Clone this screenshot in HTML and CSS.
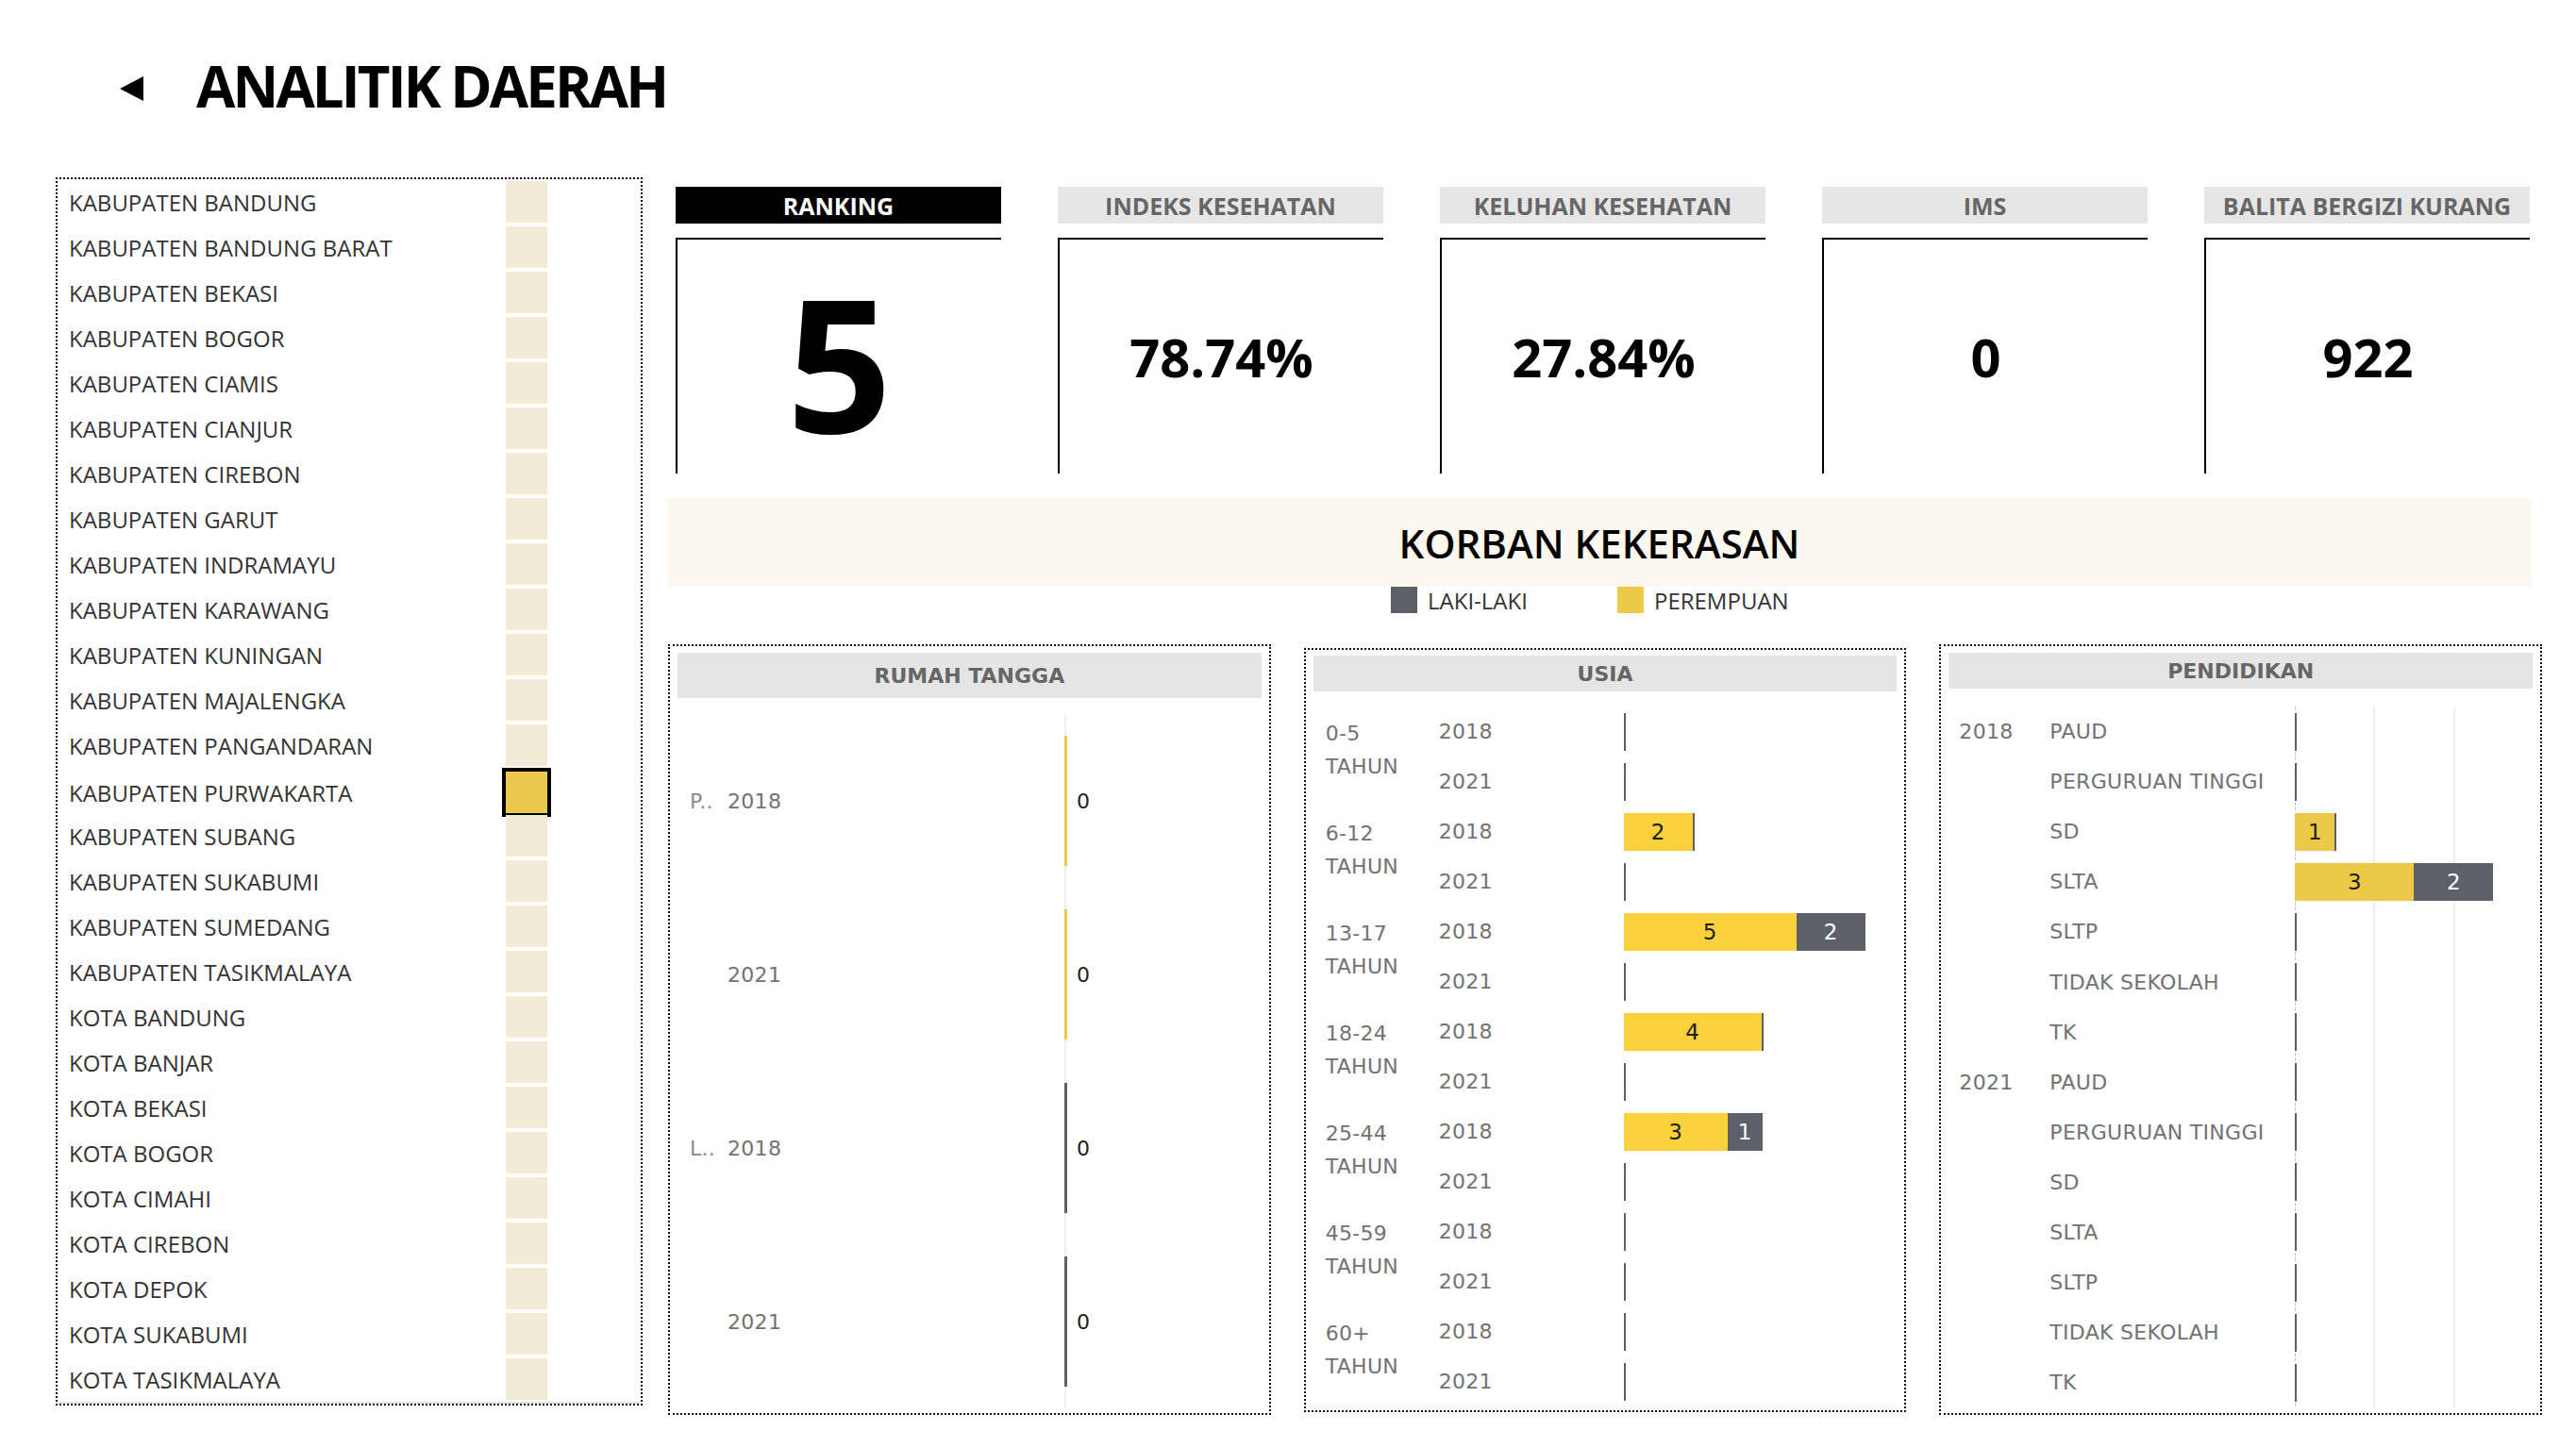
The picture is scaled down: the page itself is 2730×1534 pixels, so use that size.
FILE: index.html
```html
<!DOCTYPE html>
<html lang="id">
<head>
<meta charset="utf-8">
<title>Analitik Daerah</title>
<link rel="stylesheet" href="styles.css">
</head>
<body>
<div class="page">
  <header class="top">
    <svg class="back" width="26" height="26" viewBox="0 0 26 26" aria-hidden="true"><polygon points="0,13 25,0 25,26" fill="#000"/></svg>
    <h1 class="title">ANALITIK DAERAH</h1>
  </header>

  <div class="main">
    <div class="list">
      <div class="items">
        <div class="item"><span class="name">KABUPATEN BANDUNG</span><span class="sw"></span></div>
        <div class="item"><span class="name">KABUPATEN BANDUNG BARAT</span><span class="sw"></span></div>
        <div class="item"><span class="name">KABUPATEN BEKASI</span><span class="sw"></span></div>
        <div class="item"><span class="name">KABUPATEN BOGOR</span><span class="sw"></span></div>
        <div class="item"><span class="name">KABUPATEN CIAMIS</span><span class="sw"></span></div>
        <div class="item"><span class="name">KABUPATEN CIANJUR</span><span class="sw"></span></div>
        <div class="item"><span class="name">KABUPATEN CIREBON</span><span class="sw"></span></div>
        <div class="item"><span class="name">KABUPATEN GARUT</span><span class="sw"></span></div>
        <div class="item"><span class="name">KABUPATEN INDRAMAYU</span><span class="sw"></span></div>
        <div class="item"><span class="name">KABUPATEN KARAWANG</span><span class="sw"></span></div>
        <div class="item"><span class="name">KABUPATEN KUNINGAN</span><span class="sw"></span></div>
        <div class="item"><span class="name">KABUPATEN MAJALENGKA</span><span class="sw"></span></div>
        <div class="item"><span class="name">KABUPATEN PANGANDARAN</span><span class="sw"></span></div>
        <div class="item"><span class="name">KABUPATEN PURWAKARTA</span><span class="sw sel"></span></div>
        <div class="item"><span class="name">KABUPATEN SUBANG</span><span class="sw"></span></div>
        <div class="item"><span class="name">KABUPATEN SUKABUMI</span><span class="sw"></span></div>
        <div class="item"><span class="name">KABUPATEN SUMEDANG</span><span class="sw"></span></div>
        <div class="item"><span class="name">KABUPATEN TASIKMALAYA</span><span class="sw"></span></div>
        <div class="item"><span class="name">KOTA BANDUNG</span><span class="sw"></span></div>
        <div class="item"><span class="name">KOTA BANJAR</span><span class="sw"></span></div>
        <div class="item"><span class="name">KOTA BEKASI</span><span class="sw"></span></div>
        <div class="item"><span class="name">KOTA BOGOR</span><span class="sw"></span></div>
        <div class="item"><span class="name">KOTA CIMAHI</span><span class="sw"></span></div>
        <div class="item"><span class="name">KOTA CIREBON</span><span class="sw"></span></div>
        <div class="item"><span class="name">KOTA DEPOK</span><span class="sw"></span></div>
        <div class="item"><span class="name">KOTA SUKABUMI</span><span class="sw"></span></div>
        <div class="item"><span class="name">KOTA TASIKMALAYA</span><span class="sw"></span></div>
      </div>
    </div>

    <div class="right">
      <div class="kpis">
        <div class="kpi"><div class="kpi-h dark">RANKING</div><div class="kpi-v big">5</div></div>
        <div class="kpi"><div class="kpi-h">INDEKS KESEHATAN</div><div class="kpi-v">78.74%</div></div>
        <div class="kpi"><div class="kpi-h">KELUHAN KESEHATAN</div><div class="kpi-v">27.84%</div></div>
        <div class="kpi"><div class="kpi-h">IMS</div><div class="kpi-v">0</div></div>
        <div class="kpi"><div class="kpi-h">BALITA BERGIZI KURANG</div><div class="kpi-v">922</div></div>
      </div>

      <div class="banner">KORBAN KEKERASAN</div>
      <div class="legend">
        <div class="lg-item"><span class="lg-sw male"></span><span class="lg-t">LAKI-LAKI</span></div>
        <div class="lg-item"><span class="lg-sw female"></span><span class="lg-t">PEREMPUAN</span></div>
      </div>

      <div class="panels">
        <section class="panel p1">
          <div class="ph ph-tall">RUMAH TANGGA</div>
          <div class="rt-body">
            <div class="rt-row"><span class="l1">P..</span><span class="yr">2018</span><span class="rt-bar"><span class="vbar fem"></span><span class="val">0</span></span></div>
            <div class="rt-row"><span class="l1"></span><span class="yr">2021</span><span class="rt-bar"><span class="vbar fem"></span><span class="val">0</span></span></div>
            <div class="rt-row"><span class="l1">L..</span><span class="yr">2018</span><span class="rt-bar"><span class="vbar mal"></span><span class="val">0</span></span></div>
            <div class="rt-row"><span class="l1"></span><span class="yr">2021</span><span class="rt-bar"><span class="vbar mal"></span><span class="val">0</span></span></div>
          </div>
        </section>

        <section class="panel p2">
          <div class="ph">USIA</div>
          <div class="us-body">
            <div class="age">0-5<br>TAHUN</div>
            <span class="yr">2018</span><div class="bc"><span class="zero"></span></div>
            <span class="yr">2021</span><div class="bc"><span class="zero"></span></div>

            <div class="age">6-12<br>TAHUN</div>
            <span class="yr">2018</span><div class="bc"><span class="seg f1" style="width:73px">2</span><span class="tick"></span></div>
            <span class="yr">2021</span><div class="bc"><span class="zero"></span></div>

            <div class="age">13-17<br>TAHUN</div>
            <span class="yr">2018</span><div class="bc"><span class="seg f1" style="width:183px">5</span><span class="seg m" style="width:73px">2</span></div>
            <span class="yr">2021</span><div class="bc"><span class="zero"></span></div>

            <div class="age">18-24<br>TAHUN</div>
            <span class="yr">2018</span><div class="bc"><span class="seg f1" style="width:146px">4</span><span class="tick"></span></div>
            <span class="yr">2021</span><div class="bc"><span class="zero"></span></div>

            <div class="age">25-44<br>TAHUN</div>
            <span class="yr">2018</span><div class="bc"><span class="seg f1" style="width:110px">3</span><span class="seg m" style="width:37px">1</span></div>
            <span class="yr">2021</span><div class="bc"><span class="zero"></span></div>

            <div class="age">45-59<br>TAHUN</div>
            <span class="yr">2018</span><div class="bc"><span class="zero"></span></div>
            <span class="yr">2021</span><div class="bc"><span class="zero"></span></div>

            <div class="age">60+<br>TAHUN</div>
            <span class="yr">2018</span><div class="bc"><span class="zero"></span></div>
            <span class="yr">2021</span><div class="bc"><span class="zero"></span></div>
          </div>
        </section>

        <section class="panel p3">
          <div class="ph">PENDIDIKAN</div>
          <div class="pd-body">
            <div class="pyr">2018</div>
            <span class="cat">PAUD</span><div class="bc grid"><span class="zero"></span></div>
            <span class="cat">PERGURUAN TINGGI</span><div class="bc grid"><span class="zero"></span></div>
            <span class="cat">SD</span><div class="bc grid"><span class="seg f2" style="width:42px">1</span><span class="tick"></span></div>
            <span class="cat">SLTA</span><div class="bc grid"><span class="seg f2" style="width:126px">3</span><span class="seg m" style="width:84px">2</span></div>
            <span class="cat">SLTP</span><div class="bc grid"><span class="zero"></span></div>
            <span class="cat">TIDAK SEKOLAH</span><div class="bc grid"><span class="zero"></span></div>
            <span class="cat">TK</span><div class="bc grid"><span class="zero"></span></div>

            <div class="pyr">2021</div>
            <span class="cat">PAUD</span><div class="bc grid"><span class="zero"></span></div>
            <span class="cat">PERGURUAN TINGGI</span><div class="bc grid"><span class="zero"></span></div>
            <span class="cat">SD</span><div class="bc grid"><span class="zero"></span></div>
            <span class="cat">SLTA</span><div class="bc grid"><span class="zero"></span></div>
            <span class="cat">SLTP</span><div class="bc grid"><span class="zero"></span></div>
            <span class="cat">TIDAK SEKOLAH</span><div class="bc grid"><span class="zero"></span></div>
            <span class="cat">TK</span><div class="bc grid"><span class="zero"></span></div>
          </div>
        </section>
      </div>
    </div>
  </div>
</div>
</body>
</html>
```

FILE: styles.css
```css
* { box-sizing: border-box; }

body {
  margin: 0;
  background: #fff;
  font-family: "Open Sans", "Noto Sans", sans-serif;
  color: #000;
}

.page { width: 2730px; }

/* ---------- header ---------- */
.top {
  height: 188px;
  display: flex;
  align-items: center;
  padding-left: 127px;
}
.back { display: block; }
.title {
  margin: 0 0 6px 55px;
  font-size: 60px;
  font-weight: 700;
  letter-spacing: -2.9px;
  line-height: 1;
}

/* ---------- main ---------- */
.main {
  display: flex;
  align-items: flex-start;
  gap: 26px;
  padding-left: 59px;
}

/* list */
.list {
  width: 622px;
  border: 2px dotted #000;
}
.items { border-bottom: 2px solid #e3e3e3; }
.item {
  height: 48px;
  display: grid;
  grid-template-columns: 475px 44px;
  align-items: center;
}
.name {
  padding-left: 12px;
  font-size: 24px;
  color: #333;
  white-space: nowrap;
}
.sw {
  display: block;
  height: 44px;
  background: #f1ead4;
}
.sw.sel {
  width: 52px;
  height: 52px;
  margin-left: -4px;
  border: 4px solid #000;
  background: #ecc94b;
}

/* right column */
.right {
  width: 1987px;
  display: flex;
  flex-direction: column;
}

.kpis {
  margin-top: 10px;
  padding-left: 9px;
  display: grid;
  grid-template-columns: repeat(5, 345px);
  column-gap: 60px;
}
.kpi-h {
  height: 39px;
  display: flex;
  align-items: center;
  justify-content: center;
  background: #e6e6e6;
  color: #666;
  font-size: 25px;
  font-weight: 700;
  white-space: nowrap;
}
.kpi-h.dark { background: #000; color: #fff; }
.kpi-v {
  margin-top: 15px;
  height: 250px;
  border-top: 2px solid #000;
  border-left: 2px solid #000;
  display: flex;
  align-items: center;
  justify-content: center;
  font-size: 56px;
  font-weight: 700;
  line-height: 1;
}
.kpi-v.big {
  font-size: 195px;
  padding-top: 10px;
}

.banner {
  margin-top: 26px;
  width: 1976px;
  height: 94px;
  background: #fdf8ef;
  display: flex;
  align-items: center;
  justify-content: center;
  font-size: 42px;
  font-weight: 600;
  color: #000;
}

.legend {
  height: 28px;
  display: flex;
  align-items: center;
  padding-left: 767px;
}
.lg-item { display: flex; align-items: center; }
.lg-item + .lg-item { margin-left: 95px; }
.lg-sw { width: 28px; height: 28px; display: block; }
.lg-sw.male { background: #5d6069; }
.lg-sw.female { background: #ecc948; }
.lg-t {
  margin-left: 11px;
  font-size: 24px;
  color: #333;
  font-weight: 400;
}

/* ---------- panels ---------- */
.panels {
  margin-top: 33px;
  padding-left: 1px;
  display: flex;
  align-items: flex-start;
  gap: 35px;
}
.panel {
  width: 639px;
  height: 817px;
  border: 2px dotted #111;
  padding: 7px 8px 0 8px;
  display: flex;
  flex-direction: column;
  font-family: "DejaVu Sans", "Liberation Sans", sans-serif;
}
.p2 {
  margin-top: 4px;
  height: 810px;
  padding-top: 6px;
}
.ph {
  height: 38px;
  flex: none;
  display: flex;
  align-items: center;
  justify-content: center;
  background: #e5e5e5;
  color: #666;
  font-size: 22px;
  font-weight: 700;
}
.ph-tall { height: 48px; }

.yr, .l1, .cat, .age, .pyr {
  font-size: 22px;
  color: #727272;
  letter-spacing: 0.3px;
  white-space: nowrap;
}

/* rumah tangga */
.rt-body { margin-top: 17px; }
.rt-row {
  height: 184px;
  display: grid;
  grid-template-columns: 53px 357px 1fr;
  align-items: stretch;
}
.rt-row .l1, .rt-row .yr {
  display: flex;
  align-items: center;
}
.l1 { padding-left: 13px; color: #8a8a8a; }
.rt-bar {
  display: flex;
  align-items: center;
  background: linear-gradient(#efefef, #efefef) 0 0 / 2px 100% no-repeat;
}
.vbar { display: block; width: 3px; height: 138px; }
.vbar.fem { background: #ecc948; }
.vbar.mal { background: #5d6069; }
.val {
  margin-left: 10px;
  font-size: 22px;
  color: #222;
}

/* shared bars */
.bc {
  display: flex;
  align-items: center;
}
.seg {
  height: 40px;
  display: flex;
  align-items: center;
  justify-content: center;
  font-size: 23px;
  color: #1e1e1e;
}
.seg.f1 { background: #f9d13b; }
.seg.f2 { background: #ecc948; }
.seg.m { background: #5d6069; color: #fff; }
.zero, .tick {
  display: block;
  width: 2px;
  height: 40px;
  background: #5d6069;
}

/* usia */
.us-body {
  margin-top: 16px;
  display: grid;
  grid-template-columns: 133px 196px 1fr;
  grid-auto-rows: 53px;
}
.us-body .yr { display: flex; align-items: center; }
.age {
  grid-column: 1;
  grid-row: span 2;
  padding: 11px 0 0 13px;
  line-height: 35px;
}
.us-body .yr { grid-column: 2; }
.us-body .bc { grid-column: 3; }

/* pendidikan */
.pd-body {
  margin-top: 19px;
  display: grid;
  grid-template-columns: 107px 260px 1fr;
  grid-auto-rows: 53.1px;
}
.pyr {
  grid-column: 1;
  grid-row: span 7;
  padding-left: 11px;
  line-height: 53px;
}
.cat {
  grid-column: 2;
  display: flex;
  align-items: center;
}
.pd-body .bc { grid-column: 3; }
.bc.grid {
  background:
    linear-gradient(#c8c8c8 50%, transparent 50%) 0 0 / 1px 8px repeat-y,
    repeating-linear-gradient(to right, transparent 0 83px, #efefef 83px 85px);
}
```
